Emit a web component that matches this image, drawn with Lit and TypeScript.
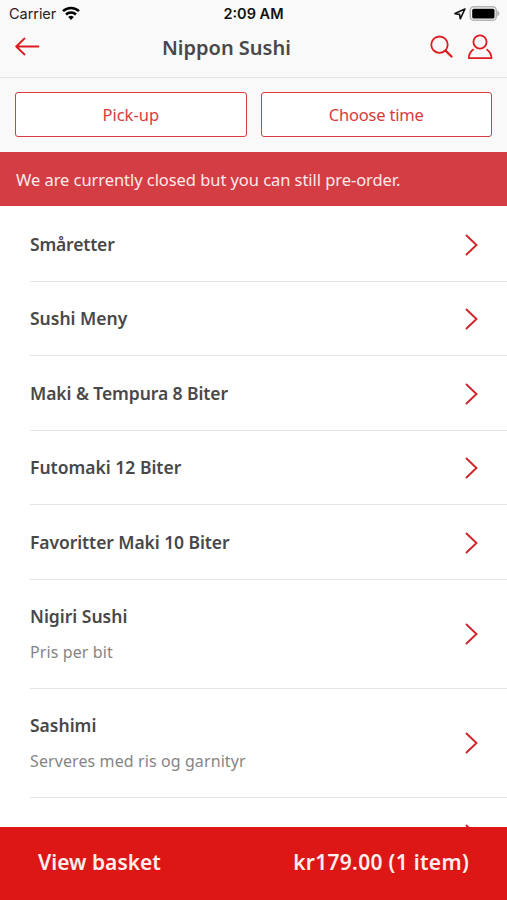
import { LitElement, html, css, nothing } from "lit";
import { customElement, property } from "lit/decorators.js";
import { styleMap } from "lit/directives/style-map.js";

interface Category {
  name: string;
  note?: string;
  tracking?: number;
}

const CATEGORIES: Category[] = [
  { name: "Småretter", tracking: -0.18 },
  { name: "Sushi Meny" },
  { name: "Maki & Tempura 8 Biter", tracking: -0.08 },
  { name: "Futomaki 12 Biter" },
  { name: "Favoritter Maki 10 Biter", tracking: -0.08 },
  { name: "Nigiri Sushi", note: "Pris per bit" },
  { name: "Sashimi", note: "Serveres med ris og garnityr" },
  { name: "" },
];

@customElement("status-bar")
class StatusBar extends LitElement {
  static styles = css`
    :host {
      display: grid;
      grid-template-columns: 1fr auto 1fr;
      align-items: center;
      height: 27px;
      padding: 0 7px 0 9px;
      font: 400 14.5px/27px Inter, sans-serif;
      color: #222;
    }
    .left,
    .right {
      display: flex;
      align-items: center;
    }
    .left {
      gap: 6px;
      letter-spacing: -0.05px;
    }
    .left svg {
      margin-top: -2px;
    }
    .right {
      justify-content: flex-end;
      gap: 3px;
    }
    .time {
      font-weight: 600;
      color: #111;
      margin-right: 2px;
    }
    svg {
      display: block;
    }
  `;
  render() {
    return html`
      <div class="left">
        <span>Carrier</span>
        <svg width="18" height="14" viewBox="0 0 18 14" fill="none" stroke="#000" stroke-width="2.5">
          <path d="M1 5.2a11.5 11.5 0 0 1 16 0" />
          <path d="M4 8.5a7.2 7.2 0 0 1 10 0" />
          <path d="M9 14 6.2 11.1a4 4 0 0 1 5.6 0z" fill="#000" stroke="none" />
        </svg>
      </div>
      <div class="time">2:09 AM</div>
      <div class="right">
        <svg width="12" height="12" viewBox="0 0 12 12" fill="none" stroke="#111" stroke-width="1.6" stroke-linejoin="round">
          <path d="M10.900 1 1 5.600l4.600.8.700 4.400z" />
        </svg>
        <svg width="31" height="15" viewBox="0 0 31 15">
          <rect x="1.25" y="0.75" width="26" height="13.500" rx="3.600" fill="#f9f9f9" stroke="#b4b4b4" stroke-width="1.500" />
          <path d="M28.200 4.500c2.800 1 2.800 5 0 6z" fill="#b4b4b4" />
          <rect x="3.200" y="2.700" width="22.300" height="9.800" rx="1.600" fill="#000" />
        </svg>
      </div>
    `;
  }
}

@customElement("title-bar")
class TitleBar extends LitElement {
  static styles = css`
    :host {
      box-sizing: border-box;
      display: flex;
      align-items: center;
      height: 51px;
      padding: 0 14px 10px 15px;
      border-bottom: 1px solid #e4e4e4;
    }
    h1 {
      flex: 1;
      margin: 2px 0 0 122px;
      font: 600 20px/28px "Noto Sans", sans-serif;
      color: #484848;
    }
    .actions {
      display: flex;
      align-items: center;
      gap: 15px;
    }
    svg {
      display: block;
      fill: none;
      stroke: #dc1c20;
      stroke-width: 1.8;
      stroke-linecap: round;
      stroke-linejoin: round;
    }
  `;
  render() {
    return html`
      <svg width="25" height="20" viewBox="0 0 25 20"><path d="M23.500 9.500H1.200M9.500 1.500 1.200 9.500l8.300 8" /></svg>
      <h1>Nippon Sushi</h1>
      <div class="actions">
        <svg width="23" height="24" viewBox="0 0 23 24">
          <circle cx="9.500" cy="9.700" r="8.200" />
          <path d="m15.500 15.700 6 5.800" stroke-width="2.300" />
        </svg>
        <svg width="25" height="26" viewBox="0 0 25 26">
          <circle cx="12" cy="8" r="6.600" />
          <path d="M5.700 15.200C3 17 .9 20 .7 24.200h22.800c-.2-4.200-2.300-7.200-5-9" stroke-linecap="butt" />
        </svg>
      </div>
    `;
  }
}

@customElement("category-row")
class CategoryRow extends LitElement {
  @property({ attribute: false }) category!: Category;
  static styles = css`
    :host {
      box-sizing: border-box;
      flex: none;
      display: flex;
      align-items: center;
      justify-content: space-between;
      height: 74.5px;
      margin-left: 30px;
      padding-right: 29px;
      border-bottom: 1px solid #e4e4e4;
      font-family: "Noto Sans", sans-serif;
    }
    :host([tall]) {
      height: 109px;
    }
    .name {
      font-size: 17.5px;
      line-height: 24px;
      font-weight: 600;
      color: #484848;
    }
    .note {
      margin-top: 12px;
      font-size: 16px;
      line-height: 24px;
      letter-spacing: 0.1px;
      color: #858585;
    }
    svg {
      display: block;
      margin-top: 2px;
    }
    :host([tall]) svg {
      margin-top: 0;
    }
  `;
  render() {
    const c = this.category;
    return html`
      <div>
        <div class="name"><span style=${styleMap({ letterSpacing: `${c.tracking ?? 0}px` })}>${c.name}</span></div>
        ${c.note ? html`<div class="note"><span>${c.note}</span></div>` : nothing}
      </div>
      <svg width="13" height="22" viewBox="0 0 13 22" fill="none" stroke="#d22328" stroke-width="1.9" stroke-linecap="round">
        <path d="M1.500 1.500 11.500 11l-10 9.500" />
      </svg>
    `;
  }
}

@customElement("app-root")
class AppRoot extends LitElement {
  static styles = css`
    :host {
      display: flex;
      flex-direction: column;
      height: 900px;
      overflow: hidden;
      background: #fff;
      font-family: "Noto Sans", sans-serif;
    }
    header {
      background: #f9f9f9;
    }
    .options {
      display: grid;
      grid-template-columns: 1fr 1fr;
      gap: 14px;
      padding: 14px 15px 15px;
    }
    button {
      height: 45px;
      padding: 0;
      border: 1.5px solid #d93c41;
      border-radius: 3px;
      background: #fff;
      color: #d63b40;
      font: 400 16.5px/24px "Noto Sans", sans-serif;
    }
    .time {
      letter-spacing: -0.2px;
    }
    .notice {
      height: 54px;
      padding: 0 16px;
      background: #d43d43;
      color: #fbe9e9;
      font-size: 16.5px;
      line-height: 55px;
      letter-spacing: -0.06px;
    }
    main {
      flex: 1;
      min-height: 0;
      overflow: hidden;
      display: flex;
      flex-direction: column;
      padding-top: 1px;
    }
    footer {
      display: flex;
      justify-content: space-between;
      height: 73px;
      padding: 0 38px;
      background: #dd1715;
      color: #fdeeee;
      font-size: 21px;
      font-weight: 600;
      line-height: 70px;
    }
    .total {
      letter-spacing: 0.3px;
    }
  `;
  render() {
    return html`
      <header>
        <status-bar></status-bar>
        <title-bar></title-bar>
        <div class="options">
          <button>Pick-up</button>
          <button class="time">Choose time</button>
        </div>
      </header>
      <div class="notice"><span>We are currently closed but you can still pre-order.</span></div>
      <main>
        ${CATEGORIES.map((c) => html`<category-row .category=${c} ?tall=${!!c.note}></category-row>`)}
      </main>
      <footer><span>View basket</span><span class="total">kr179.00 (1 item)</span></footer>
    `;
  }
}
